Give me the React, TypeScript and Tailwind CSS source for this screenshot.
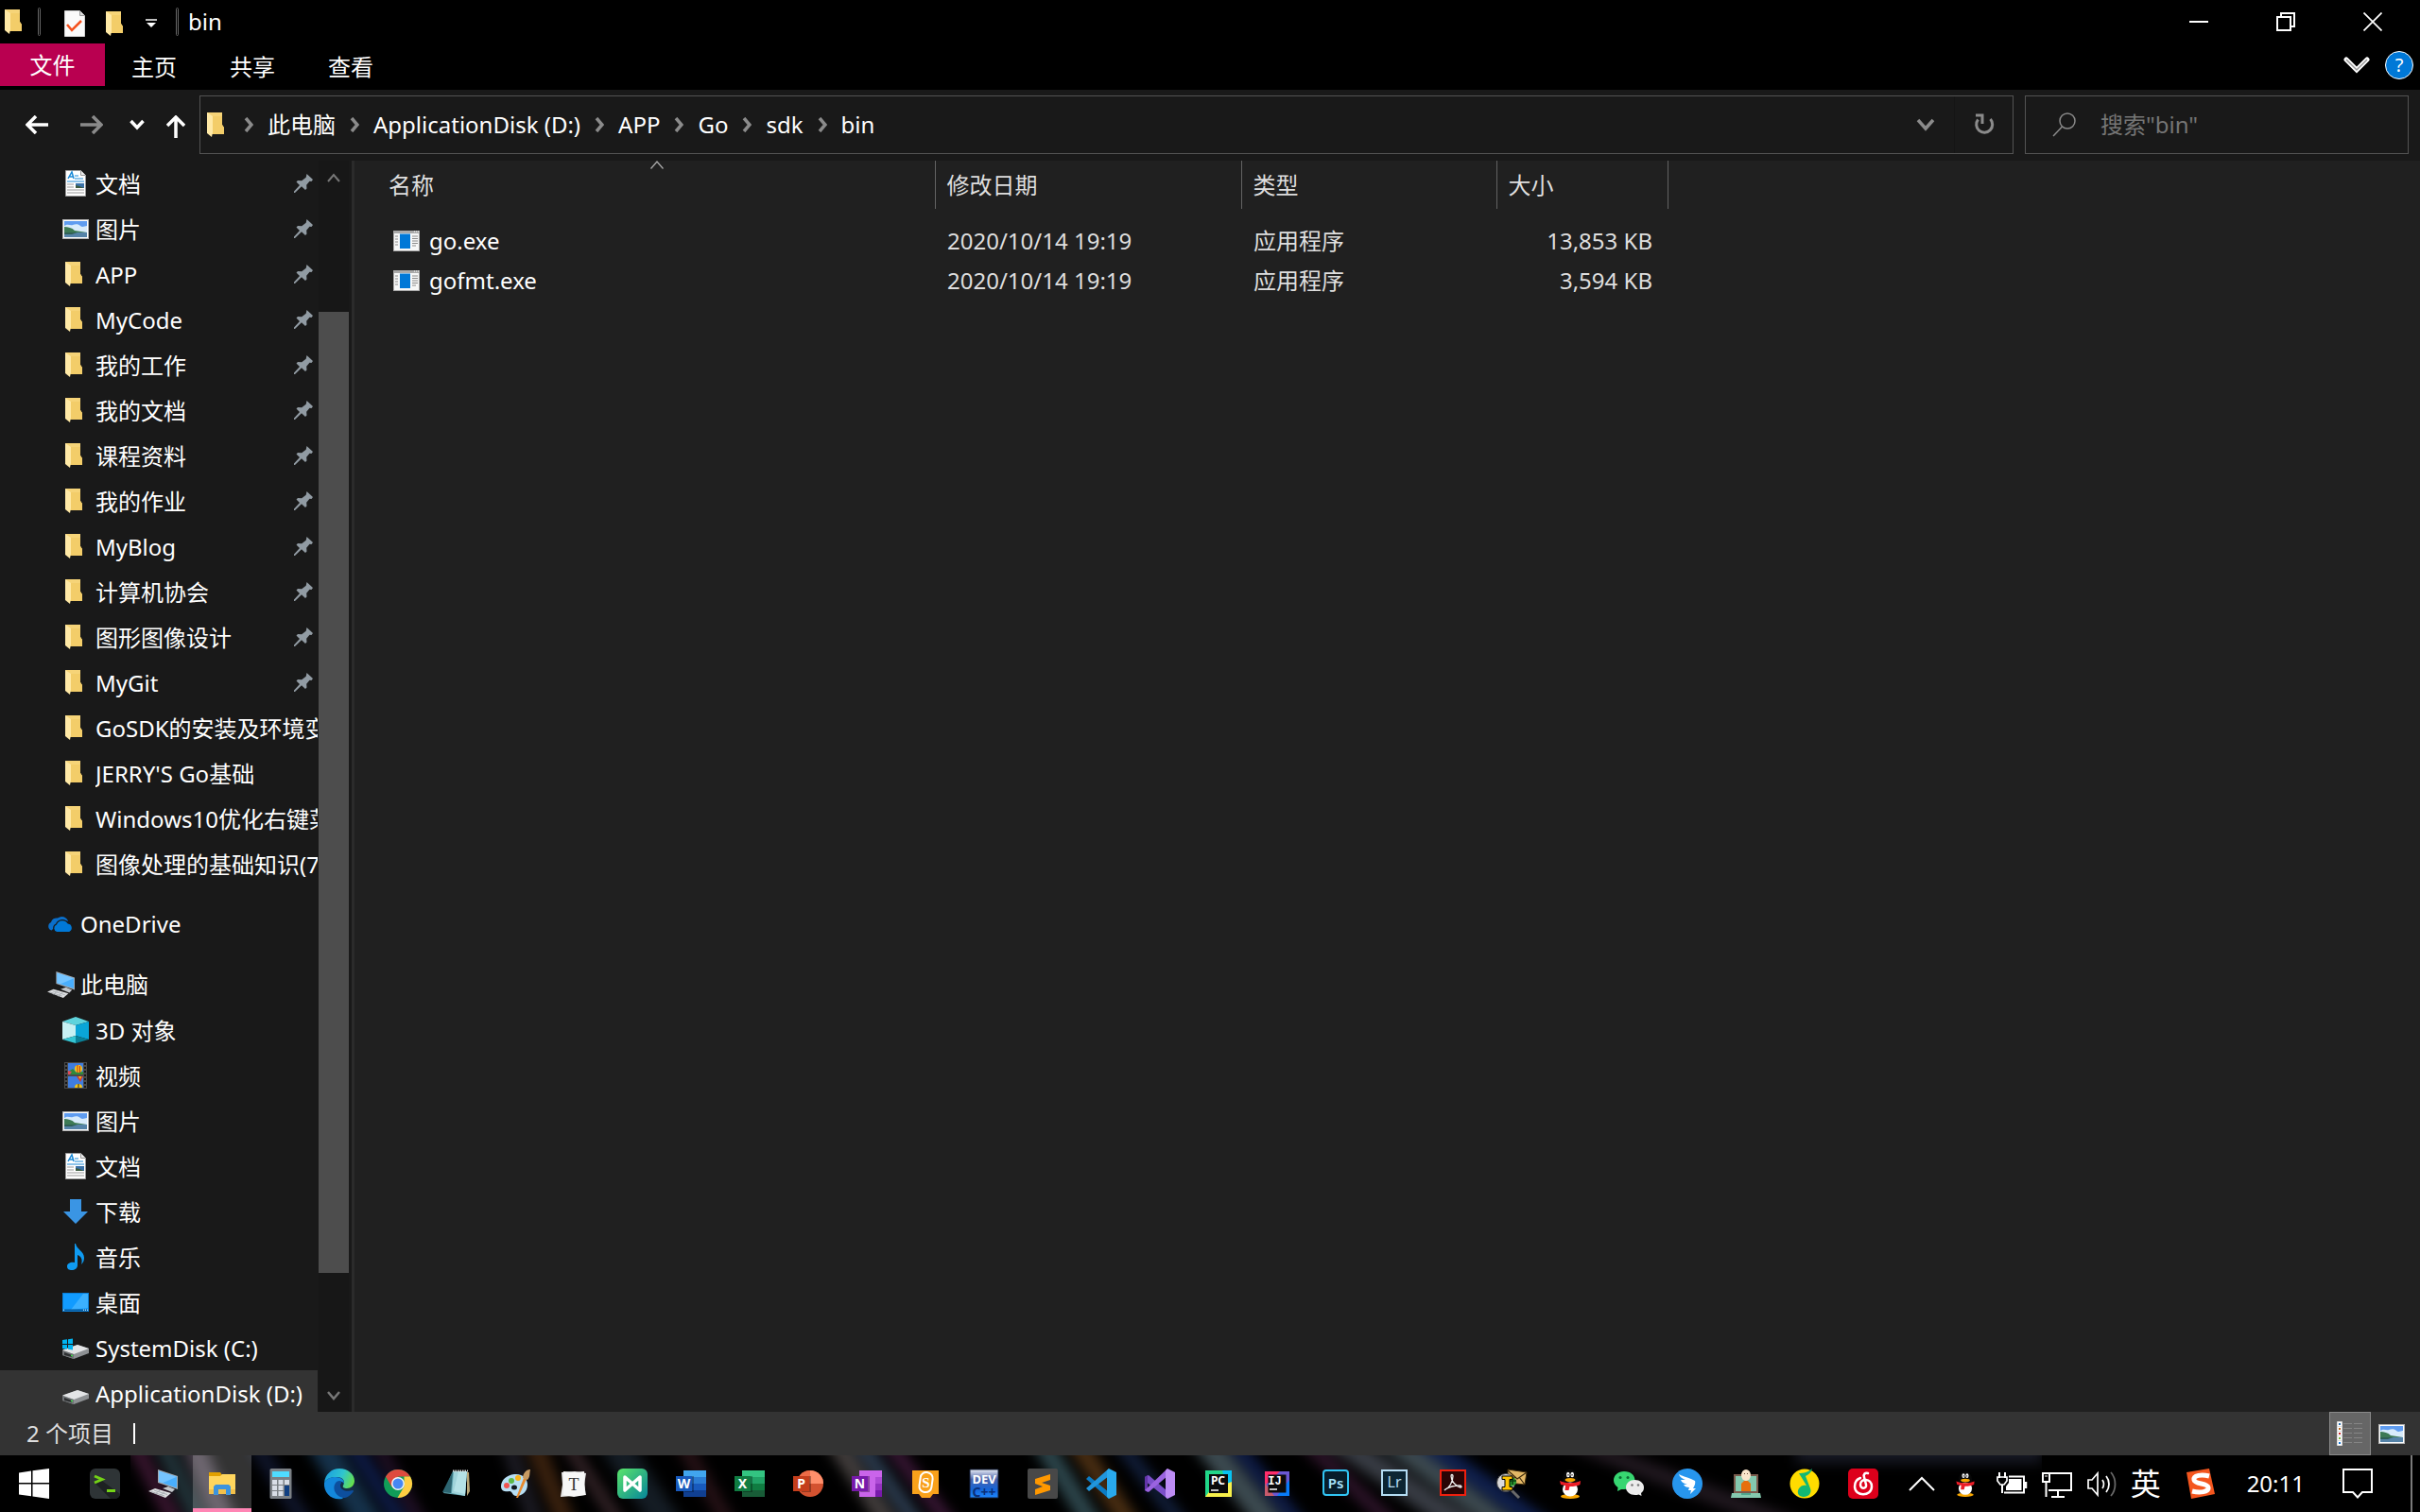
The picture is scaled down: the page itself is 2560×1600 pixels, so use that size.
import type { ReactNode } from "react";

const UI_FONT = "font-['Noto_Sans','Noto_Sans_CJK_SC',sans-serif]";

/* ---------- window icons ---------- */

function FolderIcon({ className = "h-7 w-7" }: { className?: string }) {
  return (
    <svg viewBox="0 0 28 28" className={className} aria-hidden="true">
      <path d="M3 1h16v13l2 3v7H8z" fill="#f6d478" />
      <path d="M8 5h11v9l2 3v7H8z" fill="#f3cd69" />
      <path d="M3 1l6 4v17l-1 5-5-4z" fill="#ffe9a6" />
    </svg>
  );
}

function DocIcon() {
  return (
    <svg viewBox="0 0 28 28" className="h-7 w-7" aria-hidden="true">
      <path d="M3.500 .5h16l5 5v22h-21z" fill="#fff" stroke="#9a9a9a" />
      <path d="M19.500 .5v5h5" fill="#eee" stroke="#9a9a9a" />
      <path d="M6 9l4-7 2 7M7 7h4" stroke="#1c8ad6" strokeWidth="1.500" fill="none" />
      <path d="M13 6h4M13 9h9M5 12h18" stroke="#1c8ad6" />
      <path d="M5 15h7M5 18h7M5 21h18M5 24h18" stroke="#999" />
      <path d="M14 14h9v5h-9z" fill="#3b72a8" />
      <path d="M14 16l4 1 5 2h-9z" fill="#3c5a3e" />
    </svg>
  );
}

function PictureIcon() {
  return (
    <svg viewBox="0 0 28 28" className="h-7 w-7" aria-hidden="true">
      <rect x=".5" y="4.500" width="27" height="20" fill="#fff" stroke="#b0b0b0" />
      <rect x="2" y="6" width="24" height="17" fill="#5f9cf0" />
      <path d="M2 11c4-3 6 0 9-1s6-1 8 1 5 0 7 0v7H2z" fill="#d8ebfb" />
      <path d="M2 12c4 0 8 1 11 4l13 2v1H2z" fill="#3d7a55" />
      <path d="M2 18h24v5H2z" fill="#5583a8" />
      <path d="M2 18h14l-6 2H2z" fill="#2f5f55" />
    </svg>
  );
}

function PinIcon() {
  return (
    <svg viewBox="0 0 20 20" className="mr-[5px] h-5 w-5 shrink-0" aria-hidden="true">
      <path d="M13.500 0L20 6l-1.500 2-2-.2-3.300 4 .3 3.700-1.500 1.500-4-3.800L1 20H0v-1.500l6-6.500-3.500-3.500L4 7l4.200.3 4.500-3.600z" fill="#919ba3" />
    </svg>
  );
}

function CloudIcon() {
  return (
    <svg viewBox="0 0 28 28" className="h-7 w-7" aria-hidden="true">
      <path d="M4.500 20.500A4.500 4.500 0 0 1 4 12a6 6 0 0 1 7-4.500A7 7 0 0 1 22 11l-4-1-5 3-4 3z" fill="#0a6fcb" />
      <path d="M10 22.500a4.500 4.500 0 0 1-.5-8.500 7 7 0 0 1 12.500-1 5 5 0 0 1 1.500 9.500z" fill="#0078d7" stroke="#191919" strokeWidth="1.200" />
    </svg>
  );
}

function PcIcon({ className = "h-7 w-8" }: { className?: string }) {
  return (
    <svg viewBox="0 0 32 30" className={className} aria-hidden="true">
      <path d="M10 0l21 7v14L10 14z" fill="#a5abb0" />
      <path d="M11 1.500l19 6.300v11.600L11 13z" fill="#49aefc" />
      <path d="M11 1.500l19 6.300-15 6.500-4-1.300z" fill="#75c4ff" />
      <path d="M15 20l6-2 7 3-3 3z" fill="#c3c7cb" />
      <path d="M0 23l7-3 17 5-6 5z" fill="#dfe1e3" />
      <path d="M3 23.500l14 4.500M6 22l14 4.500M7 26l5-4M12 28l5-4" stroke="#a8adb2" />
    </svg>
  );
}

function CubeIcon() {
  return (
    <svg viewBox="0 0 28 28" className="h-7 w-7" aria-hidden="true">
      <path d="M14 0l14 5-14 4L0 5z" fill="#5fd3dc" />
      <path d="M0 5l14 4v11L0 24z" fill="#c7f0f3" />
      <path d="M28 5L14 9v11l14 4z" fill="#0aa5d8" />
      <path d="M0 24l14-4v8z" fill="#35c5d3" />
      <path d="M28 24l-14-4v8z" fill="#0a7f96" />
    </svg>
  );
}

function VideoIcon() {
  return (
    <svg viewBox="0 0 28 28" className="h-7 w-7" aria-hidden="true">
      <path d="M2 0h24v28H2z" fill="#4a4a4a" />
      <path d="M3 2h2M3 6h2M3 10h2M3 14h2M3 18h2M3 22h2M3 26h2M23 2h2M23 6h2M23 10h2M23 14h2M23 18h2M23 22h2M23 26h2" stroke="#161616" strokeWidth="2" />
      <path d="M6 1h16v12H6zM6 15h16v12H6z" fill="#3f7de0" />
      <path d="M6 10l5-3 4 4 7-1v3H6z" fill="#2f8a3a" />
      <path d="M6 9l4 1-2 3H6z" fill="#e04a5a" />
      <circle cx="17" cy="7" r="4" fill="#f5c518" />
      <path d="M16 3v8M18.500 4v7" stroke="#c52a1d" />
      <path d="M15 15h7l-3 6z" fill="#d63b25" />
      <path d="M17 15h3l-1 3z" fill="#f5c518" />
      <path d="M13 27a4 4 0 0 1 8 0z" fill="#f5c518" />
      <path d="M17 23v4" stroke="#222" />
    </svg>
  );
}

function DownloadIcon() {
  return (
    <svg viewBox="0 0 28 28" className="h-7 w-7" aria-hidden="true">
      <path d="M8 1h12v13h7L14 27 1 14h7z" fill="#3a95e4" />
    </svg>
  );
}

function MusicIcon() {
  return (
    <svg viewBox="0 0 28 28" className="h-7 w-7" aria-hidden="true">
      <path d="M14 0c1 6 9 8 9 15 0 3-1 5-3 7 2-6-1-9-4-10v11c0 3-3 5-6 5s-5-1-5-4 4-5 8-4V0z" fill="#0f9bf2" />
    </svg>
  );
}

function DesktopIcon() {
  return (
    <svg viewBox="0 0 28 28" className="h-7 w-7" aria-hidden="true">
      <rect x=".5" y="4.500" width="27" height="19" fill="#119bff" stroke="#0a7fd8" />
      <path d="M27 5v15L9 22 22 5z" fill="#3bb0ff" />
      <path d="M1 21.500h26v1.500H1z" fill="#075a9c" />
      <path d="M1 22.200h1M22 22.200h1M24 22.200h1M26 22.200h1" stroke="#fff" />
    </svg>
  );
}

function DriveIcon({ system = false }: { system?: boolean }) {
  return (
    <svg viewBox="0 0 28 28" className="h-7 w-7" aria-hidden="true">
      <path d="M0 17l16-6 12 4v5l-16 6-12-4z" fill="#8d9093" />
      <path d="M0 16.500L16 11l12 4-16 6z" fill="#e3e4e6" />
      <path d="M0 17l12 4v5L0 22z" fill="#6f7275" />
      <path d="M2 19l8 3v2l-8-2z" fill="#2d2f31" />
      <path d="M9 22.500h2" stroke="#3ddc4a" strokeWidth="1.500" />
      {system && <path d="M0 6l5-.7V10H0zM6 5.200L11 4.500V10H6zM0 11h5v4.700L0 15zM6 11h5v5.500l-5-.7z" fill="#00b4f1" />}
    </svg>
  );
}

function ExeIcon() {
  return (
    <svg viewBox="0 0 28 22" className="h-[22px] w-7" aria-hidden="true">
      <path d="M0 0h28v22H0z" fill="#a9a9a9" />
      <path d="M1 3h26v18H1z" fill="#f7f7f7" />
      <path d="M22 1h1M24 1h1M26 1h1" stroke="#fff" />
      <path d="M7 3.500h11V19H7z" fill="#0078d7" />
      <path d="M2 6h3M2 9h3M2 12h3M2 15h3M20 6h6M20 8.500h6M20 11h6M20 13.500h6M20 16h4" stroke="#8b8b8b" />
    </svg>
  );
}

function CrumbChevron() {
  return (
    <svg viewBox="0 0 10 16" className="h-4 w-[10px]" aria-hidden="true">
      <path d="M2 1l6 7-6 7" fill="none" stroke="#8b8b8b" strokeWidth="3.500" />
    </svg>
  );
}

/* ---------- top of the window ---------- */

function TitleBar() {
  return (
    <header className="flex h-[46px] shrink-0 items-center bg-black">
      <div className="flex items-center pl-[2px]">
        <FolderIcon />
        <span className="ml-[10px] h-[30px] w-[3px] rounded-sm border border-[#666]" />
        <button type="button" aria-label="属性" className="ml-[22px] mt-1">
          <svg viewBox="0 0 28 28" className="h-7 w-7" aria-hidden="true">
            <path d="M3.500 .5h16l5 5v22h-21z" fill="#fafafa" stroke="#cfcfcf" />
            <path d="M19.500 .5v5h5" fill="#ddd" stroke="#999" />
            <path d="M6 15l5 6L21 11" fill="none" stroke="#f4511e" strokeWidth="2.500" />
          </svg>
        </button>
        <button type="button" aria-label="新建文件夹" className="ml-4 mt-1">
          <FolderIcon />
        </button>
        <button type="button" aria-label="自定义快速访问工具栏" className="ml-[17px] mt-1">
          <svg viewBox="0 0 12 10" className="h-[10px] w-3" aria-hidden="true">
            <path d="M0 1h12" stroke="#fff" strokeWidth="1.500" />
            <path d="M1 4h10L6 9z" fill="#fff" />
          </svg>
        </button>
        <span className="ml-5 h-[30px] w-[3px] rounded-sm border border-[#666]" />
        <h1 className="ml-[10px] text-2xl leading-[46px]">bin</h1>
      </div>
      <div className="ml-auto flex pr-1">
        <button type="button" aria-label="最小化" className="flex h-[42px] w-[92px] items-center justify-center">
          <svg viewBox="0 0 20 20" className="h-5 w-5"><path d="M0 10h20" stroke="#fff" strokeWidth="2" /></svg>
        </button>
        <button type="button" aria-label="向下还原" className="flex h-[42px] w-[92px] items-center justify-center">
          <svg viewBox="0 0 20 20" className="h-5 w-5"><path d="M1 5h14v14H1zM5 5V1h14v14h-4" fill="none" stroke="#fff" strokeWidth="2" /></svg>
        </button>
        <button type="button" aria-label="关闭" className="flex h-[42px] w-[92px] items-center justify-center">
          <svg viewBox="0 0 20 20" className="h-5 w-5"><path d="M.5 .5l19 19M19.500 .5l-19 19" stroke="#fff" strokeWidth="1.700" /></svg>
        </button>
      </div>
    </header>
  );
}

function RibbonTabs() {
  return (
    <div className="flex h-[49px] shrink-0 items-start bg-black text-2xl">
      <button type="button" className="h-[45px] w-[111px] bg-[#b90050] leading-[44px]">文件</button>
      {["主页", "共享", "查看"].map((tab) => (
        <button key={tab} type="button" className="h-[49px] w-[104px] leading-[48px]">{tab}</button>
      ))}
      <div className="ml-auto flex h-[46px] items-center gap-4 pr-[7px]">
        <button type="button" aria-label="展开功能区">
          <svg viewBox="0 0 28 18" className="h-[18px] w-7" aria-hidden="true">
            <path d="M3 3l11 11L25 3" fill="none" stroke="#fff" strokeWidth="5" strokeLinecap="round" />
            <path d="M3 3l11 11L25 3" fill="none" stroke="#9a9a9a" strokeWidth="1.500" />
          </svg>
        </button>
        <button type="button" aria-label="帮助" className="h-[30px] w-[30px] rounded-full border border-white bg-[#0078d7] text-xl leading-7">?</button>
      </div>
    </div>
  );
}

const crumbs = ["此电脑", "ApplicationDisk (D:)", "APP", "Go", "sdk", "bin"];

function AddressRow() {
  return (
    <div className="flex h-[75px] shrink-0 items-start bg-[#191919] pt-[6px] pr-3">
      <div className="flex h-[62px] w-[211px] items-center pl-[27px]">
        <button type="button" aria-label="后退">
          <svg viewBox="0 0 24 20" className="h-5 w-6"><path d="M11 1l-9 9 9 9M2 10h22" fill="none" stroke="#fff" strokeWidth="3.500" /></svg>
        </button>
        <button type="button" aria-label="前进" className="ml-[34px]">
          <svg viewBox="0 0 24 20" className="h-5 w-6"><path d="M13 1l9 9-9 9M22 10H0" fill="none" stroke="#8a8a8a" strokeWidth="3.500" /></svg>
        </button>
        <button type="button" aria-label="最近浏览的位置" className="ml-7">
          <svg viewBox="0 0 16 12" className="h-3 w-4"><path d="M1.500 2L8 9l6.500-7" fill="none" stroke="#fff" strokeWidth="3.500" /></svg>
        </button>
        <button type="button" aria-label="上移" className="ml-[23px]">
          <svg viewBox="0 0 20 24" className="mt-1 h-6 w-5"><path d="M1 11l9-9 9 9M10 2v22" fill="none" stroke="#fff" strokeWidth="3.500" /></svg>
        </button>
      </div>
      <nav aria-label="地址" className="flex h-[62px] grow items-center border border-[#535353] pl-1 text-2xl">
        <FolderIcon />
        <ol className="ml-[14px] flex items-center">
          {crumbs.map((crumb) => (
            <li key={crumb} className="flex items-center">
              <CrumbChevron />
              <a href="#" className="mx-[15px]">{crumb}</a>
            </li>
          ))}
        </ol>
        <button type="button" aria-label="以前的位置" className="mr-5 ml-auto">
          <svg viewBox="0 0 20 14" className="h-[14px] w-5"><path d="M2 2l8 9 8-9" fill="none" stroke="#8b8b8b" strokeWidth="3.500" /></svg>
        </button>
        <button type="button" aria-label="刷新" className="flex h-full w-[62px] items-center justify-center border-l border-[#151515]">
          <svg viewBox="0 0 22 26" className="h-[26px] w-[22px]">
            <path d="M4.500 7.500A8.500 8.500 0 1 0 17.500 7" fill="none" stroke="#8b8b8b" strokeWidth="3" />
            <path d="M2 1.500h8.500V12h-3V4.500H2z" fill="#8b8b8b" />
          </svg>
        </button>
      </nav>
      <label className="ml-3 flex h-[62px] w-[406px] items-center border border-[#535353] pl-7">
        <svg viewBox="0 0 26 26" className="h-[26px] w-[26px] shrink-0" aria-hidden="true">
          <circle cx="16" cy="9" r="8" fill="none" stroke="#8a8a8a" strokeWidth="1.500" />
          <path d="M10.500 15L1 25" stroke="#8a8a8a" strokeWidth="1.500" />
        </svg>
        <input type="search" aria-label="搜索" placeholder={'搜索"bin"'} className="ml-[25px] w-full min-w-0 bg-transparent text-2xl outline-none placeholder:text-[#757575]" />
      </label>
    </div>
  );
}

/* ---------- navigation tree ---------- */

type Item = { label: string; icon: ReactNode; pinned?: boolean; selected?: boolean };

const folder = (label: string, pinned = true): Item => ({ label, icon: <FolderIcon />, pinned });

const quickAccess: Item[] = [
  { label: "文档", icon: <DocIcon />, pinned: true },
  { label: "图片", icon: <PictureIcon />, pinned: true },
  folder("APP"),
  folder("MyCode"),
  folder("我的工作"),
  folder("我的文档"),
  folder("课程资料"),
  folder("我的作业"),
  folder("MyBlog"),
  folder("计算机协会"),
  folder("图形图像设计"),
  folder("MyGit"),
  folder("GoSDK的安装及环境变", false),
  folder("JERRY'S Go基础", false),
  folder("Windows10优化右键菜", false),
  folder("图像处理的基础知识(7", false),
];

const thisPc: Item[] = [
  { label: "3D 对象", icon: <CubeIcon /> },
  { label: "视频", icon: <VideoIcon /> },
  { label: "图片", icon: <PictureIcon /> },
  { label: "文档", icon: <DocIcon /> },
  { label: "下载", icon: <DownloadIcon /> },
  { label: "音乐", icon: <MusicIcon /> },
  { label: "桌面", icon: <DesktopIcon /> },
  { label: "SystemDisk (C:)", icon: <DriveIcon system /> },
  { label: "ApplicationDisk (D:)", icon: <DriveIcon />, selected: true },
];

function TreeItems({ items }: { items: Item[] }) {
  return (
    <ul>
      {items.map((item) => (
        <li key={item.label} className={item.selected ? "bg-[#333]" : ""}>
          <a href="#" className="flex h-12 items-center pl-[66px]">
            <span className="w-7 shrink-0">{item.icon}</span>
            <span className="ml-[7px] min-w-0 grow overflow-hidden leading-[47px] whitespace-nowrap">{item.label}</span>
            {item.pinned && <PinIcon />}
          </a>
        </li>
      ))}
    </ul>
  );
}

function Sidebar() {
  return (
    <aside className="flex w-[375px] shrink-0 overflow-hidden border-r-[3px] border-[#2b2b2b] bg-[#191919] text-2xl">
      <nav aria-label="导航窗格" className="w-[336px] overflow-hidden">
        <TreeItems items={quickAccess} />
        <a href="#" className="mt-4 flex h-12 items-center gap-[7px] pl-[50px] leading-[46px]"><CloudIcon />OneDrive</a>
        <a href="#" className="mt-4 flex h-12 items-center gap-1 pl-[49px] leading-[46px]"><PcIcon />此电脑</a>
        <TreeItems items={thisPc} />
      </nav>
      <div className="ml-px flex w-8 flex-col items-center bg-[#171717]">
        <button type="button" aria-label="向上滚动" className="flex h-9 w-full items-center justify-center">
          <svg viewBox="0 0 14 10" className="h-[10px] w-[14px]"><path d="M1 9l6-7 6 7" fill="none" stroke="#777" strokeWidth="2" /></svg>
        </button>
        <div className="mt-[124px] w-full grow bg-[#4d4d4d]" />
        <button type="button" aria-label="向下滚动" className="mt-[113px] flex h-[34px] w-full items-center justify-center">
          <svg viewBox="0 0 14 10" className="h-[10px] w-[14px]"><path d="M1 1l6 7 6-7" fill="none" stroke="#777" strokeWidth="2.500" /></svg>
        </button>
      </div>
    </aside>
  );
}

/* ---------- file list ---------- */

const files = [
  { name: "go.exe", date: "2020/10/14 19:19", kind: "应用程序", size: "13,853 KB" },
  { name: "gofmt.exe", date: "2020/10/14 19:19", kind: "应用程序", size: "3,594 KB" },
];

function FileList() {
  return (
    <main className="grow bg-[#202020] text-2xl text-[#dedede]">
      <table className="table-fixed border-collapse text-left">
        <colgroup>
          <col className="w-[614px]" />
          <col className="w-[324px]" />
          <col className="w-[270px]" />
          <col className="w-[181px]" />
        </colgroup>
        <thead>
          <tr className="h-[51px]">
            <th aria-sort="ascending" className="relative border-r border-[#636363] p-0 pl-9 font-normal">
              <button type="button">名称</button>
              <svg viewBox="0 0 14 9" className="absolute top-0 left-[313px] h-[9px] w-[14px]" aria-hidden="true">
                <path d="M.5 8.500L7 1l6.500 7.500" fill="none" stroke="#aaa" strokeWidth="1.300" />
              </svg>
            </th>
            {["修改日期", "类型", "大小"].map((head) => (
              <th key={head} className="border-r border-[#636363] p-0 pl-3 font-normal">
                <button type="button">{head}</button>
              </th>
            ))}
          </tr>
        </thead>
        <tbody>
          <tr className="h-[13px]" aria-hidden="true"><td colSpan={4} className="p-0" /></tr>
          {files.map((file) => (
            <tr key={file.name} className="h-[42px] leading-10">
              <td className="p-0 pl-[41px]">
                <a href="#" className="flex items-center gap-[10px] text-white">
                  <ExeIcon />
                  {file.name}
                </a>
              </td>
              <td className="p-0 pl-[13px]">{file.date}</td>
              <td className="p-0 pl-[13px]">{file.kind}</td>
              <td className="p-0 pr-4 text-right">{file.size}</td>
            </tr>
          ))}
        </tbody>
      </table>
    </main>
  );
}

function StatusBar() {
  return (
    <footer className="flex h-[46px] shrink-0 items-center bg-[#333] text-2xl">
      <p className="pl-7 text-[#dedede]">2 个项目</p>
      <span className="ml-[21px] h-[22px] w-[2px] bg-white" />
      <button type="button" aria-label="详细信息" className="ml-auto flex h-[46px] w-11 items-center justify-center border border-[#8a8a8a] bg-[#666]">
        <svg viewBox="0 0 28 26" className="h-[26px] w-7" aria-hidden="true">
          {[0, 1, 2, 3, 4].map((row) => (
            <g key={row} transform={`translate(0 ${row * 5})`}>
              <path d="M.5 .5h5v5h-5z" fill="#fff" stroke="#ddd" />
              <path d="M2 2h2v2H2z" fill={["#2a6fb0", "#b5651d", "#c62828", "#7cb342", "#1976d2"][row]} />
              <path d="M7 2.500h9M18 2.500h9" stroke="#858585" />
            </g>
          ))}
        </svg>
      </button>
      <button type="button" aria-label="大缩略图" className="mr-2 flex h-[46px] w-11 items-center justify-center">
        <PictureIcon />
      </button>
    </footer>
  );
}

/* ---------- taskbar ---------- */

function Icon({ children, className = "h-8 w-8" }: { children: ReactNode; className?: string }) {
  return <svg viewBox="0 0 32 32" className={`overflow-visible ${className}`} aria-hidden="true">{children}</svg>;
}

function OfficeIcon({ letter, dark, tones }: { letter: string; dark: string; tones: string[] }) {
  return (
    <Icon>
      <path d="M8 2h24v8H8z" fill={tones[0]} />
      <path d="M8 9h24v7H8z" fill={tones[1]} />
      <path d="M8 16h24v7H8z" fill={tones[2]} />
      <path d="M8 23h24v7H8z" fill={tones[3]} />
      <path d="M9 8h10v17H9z" fill="#000" opacity=".3" />
      <path d="M0 8h17v16H0z" fill={dark} />
      <text x="8.500" y="21" textAnchor="middle" fontSize="14" fontWeight="700" fill="#fff">{letter}</text>
    </Icon>
  );
}

function QqIcon({ className }: { className?: string }) {
  return (
    <Icon className={className}>
      <ellipse cx="16" cy="29.500" rx="10" ry="2.500" fill="#f7a600" />
      <path d="M8 12c0-15 16-15 16 0l1 9c1 10-19 10-18 0z" fill="#080808" />
      <ellipse cx="16" cy="22" rx="8" ry="7.500" fill="#fff" />
      <ellipse cx="13.800" cy="6.500" rx="1.800" ry="2.700" fill="#fff" />
      <ellipse cx="18.200" cy="6.500" rx="1.800" ry="2.700" fill="#fff" />
      <path d="M14 6v1.500M18 6v1.500" stroke="#000" />
      <ellipse cx="16" cy="12" rx="5.500" ry="2" fill="#f7a600" />
      <path d="M5 13c7 3 15 3 22 0l-.5 4c-3 1.500-6 2-11 2l-1 4h-4l.5-5-5-1z" fill="#eb1c26" />
    </Icon>
  );
}

const apps: { name: string; icon: ReactNode; active?: boolean }[] = [
  {
    name: "终端",
    icon: (
      <Icon>
        <rect width="32" height="32" rx="6" fill="#2e3436" />
        <path d="M6 16l7-3 19 14c0 3-3 5-6 5h-4z" fill="#1d2122" />
        <path d="M5 8l8 3.500L5 15" fill="none" stroke="#73d216" strokeWidth="3" />
        <path d="M18 23.500h9" stroke="#73d216" strokeWidth="3" />
      </Icon>
    ),
  },
  { name: "此电脑", icon: <PcIcon className="h-[30px] w-8" /> },
  {
    name: "文件资源管理器",
    active: true,
    icon: (
      <Icon>
        <path d="M2 4h12l2 3v4H2z" fill="#e2a100" />
        <path d="M2 8h12l2-2h14v21H2z" fill="#ffd65e" />
        <path d="M2 22h28v5H2z" fill="#f3c04a" />
        <path d="M7 28V19l2-2h14l2 2v9h-5v-6h-8v6z" fill="#3c93dd" />
      </Icon>
    ),
  },
  {
    name: "计算器",
    icon: (
      <Icon>
        <rect x="4.500" width="23" height="32" rx="1.500" fill="#7b8085" />
        <path d="M7 3h18v6H7z" fill="#4fdcff" />
        <path d="M7 12h5v5H7zM13.500 12h5v5h-5zM20 12h5v5h-5zM7 18h5v5H7zM13.500 18h5v5h-5zM7 24h5v5H7zM13.500 24h5v5h-5z" fill="#d8dde6" />
        <path d="M20 18h5v11h-5z" fill="#103f82" />
      </Icon>
    ),
  },
  {
    name: "Edge",
    icon: (
      <Icon>
        <defs>
          <linearGradient id="edgeTop" x1="0" x2="1" y1=".3" y2=".6">
            <stop offset="0" stopColor="#1a9fe0" />
            <stop offset=".55" stopColor="#2fc4cf" />
            <stop offset="1" stopColor="#66e04a" />
          </linearGradient>
        </defs>
        <path d="M16 0c9 0 16 6 16 13 0 5-4 8-8 8-3 0-5-1-4-3 3-5-1-9-6-9C7 9 2 11 0 15 1 6 8 0 16 0z" fill="url(#edgeTop)" />
        <path d="M0 15c2-4 7-6 12-6 6 0 9 3 9 7-1-2-4-3-6-2-4 3-3 12 6 16l-2 2C8 34-1 26 0 15z" fill="#1388dc" />
        <path d="M13 14c-6 6-1 17 9 17 4-1 7-4 9-7 0-1-1-1-1-1-6 2-13 0-13-5 0-2 2-3 1-4-1-1-4-1-5 0z" fill="#0d4f9e" />
      </Icon>
    ),
  },
  {
    name: "Chrome",
    icon: (
      <Icon>
        <circle cx="16" cy="16" r="15" fill="#109d58" />
        <path d="M3 8.500A15 15 0 0 1 29 8.500H16l-6.500 11z" fill="#de4b3e" />
        <path d="M29 8.500A15 15 0 0 1 15.500 31l7-12V8.500z" fill="#ffcd42" />
        <circle cx="16" cy="16" r="7" fill="#f4f4f4" />
        <circle cx="16" cy="16" r="5.500" fill="#4687f4" />
      </Icon>
    ),
  },
  {
    name: "记事本",
    icon: (
      <Icon>
        <path d="M27 4h2l1 20-3 5z" fill="#bba879" />
        <path d="M12 3h15l-2 26-23-3z" fill="#5fa3ae" />
        <path d="M13 3h14l-2 26-14-3z" fill="#9fd3da" />
        <path d="M18 3h9l-2 24-12-3z" fill="#c5ecf0" opacity=".6" />
        <path d="M12 3L1 25l9 1z" fill="#2d6571" />
        <path d="M12 2.500h16" stroke="#dadada" strokeWidth="2" strokeDasharray="1.500 1" />
      </Icon>
    ),
  },
  {
    name: "画图",
    icon: (
      <Icon>
        <path d="M15 6c9-1 14 5 14 11 0 8-6 12-12 12-4 0-4-5-7-5-4 1-9 0-9-5C1 12 7 7 15 6z" fill="#b7dff5" />
        <ellipse cx="15" cy="20" rx="3" ry="2.500" fill="#121820" />
        <circle cx="7" cy="18" r="3" fill="#ef5350" />
        <circle cx="12" cy="13" r="3" fill="#5cb948" />
        <circle cx="19" cy="10" r="3" fill="#f9b41c" />
        <path d="M25 10l3 1-9 20h-2z" fill="#e78a2e" />
        <path d="M24 10c0-4 3-9 8-9-1 4 0 8-3 11z" fill="#c79a62" />
      </Icon>
    ),
  },
  {
    name: "Typora",
    icon: (
      <Icon>
        <path d="M3 4l14-1 12 2-2 12 2 11-14 1-13 1 2-13z" fill="#e9e9e9" />
        <path d="M5 3l11 1 11-1 1 25-12 2-11-2z" fill="#f7f7f7" />
        <text x="16" y="23" textAnchor="middle" fontSize="18" fill="#333" className="font-['Liberation_Serif',serif]">T</text>
      </Icon>
    ),
  },
  {
    name: "思维导图",
    icon: (
      <Icon>
        <defs>
          <linearGradient id="mind" x1="0" x2="1" y1="0" y2="1">
            <stop offset="0" stopColor="#5be56a" />
            <stop offset="1" stopColor="#06869a" />
          </linearGradient>
        </defs>
        <rect width="32" height="32" rx="6" fill="url(#mind)" />
        <path d="M8 23V9l16 14V9L8 23z" fill="none" stroke="#fff" strokeWidth="3.500" strokeLinejoin="round" />
      </Icon>
    ),
  },
  { name: "Word", icon: <OfficeIcon letter="W" dark="#185abd" tones={["#41a5ee", "#2b7cd3", "#185abd", "#103f91"]} /> },
  { name: "Excel", icon: <OfficeIcon letter="X" dark="#107c41" tones={["#33c481", "#21a366", "#107c41", "#185c37"]} /> },
  {
    name: "PowerPoint",
    icon: (
      <Icon>
        <circle cx="18" cy="16" r="14" fill="#d35230" />
        <path d="M18 2a14 14 0 0 1 14 14H18z" fill="#ff8f6b" />
        <path d="M18 2A14 14 0 0 0 4 16h14z" fill="#ed6c47" />
        <path d="M9 8h10v17H9z" fill="#000" opacity=".3" />
        <path d="M0 8h17v16H0z" fill="#c43e1c" />
        <text x="8.500" y="21" textAnchor="middle" fontSize="14" fontWeight="700" fill="#fff">P</text>
      </Icon>
    ),
  },
  {
    name: "OneNote",
    icon: (
      <Icon>
        <path d="M8 2h24v28H8z" fill="#ca64ea" />
        <path d="M25 9h7v7h-7z" fill="#ae4bd5" />
        <path d="M25 16h7v7h-7z" fill="#9332bf" />
        <path d="M25 23h7v7h-7z" fill="#7719aa" />
        <path d="M9 8h10v17H9z" fill="#000" opacity=".3" />
        <path d="M0 8h17v16H0z" fill="#7719aa" />
        <text x="8.500" y="21" textAnchor="middle" fontSize="14" fontWeight="700" fill="#fff">N</text>
      </Icon>
    ),
  },
  {
    name: "Scratch",
    icon: (
      <Icon>
        <path d="M2 2h28v25h-6l-3 4h-9l-3-4H2z" fill="#f9a11b" />
        <rect x="10" y="4" width="13" height="21" rx="6" transform="rotate(8 16 15)" fill="none" stroke="#fff" strokeWidth="2" />
        <text x="16.500" y="20" textAnchor="middle" fontSize="15" fontWeight="700" fill="#fff" className="font-['Liberation_Serif',serif]">S</text>
      </Icon>
    ),
  },
  {
    name: "Dev-C++",
    icon: (
      <Icon>
        <defs>
          <linearGradient id="dev" x1="0" x2="0" y1="0" y2="1">
            <stop offset="0" stopColor="#e8ecf5" />
            <stop offset=".35" stopColor="#4a62a8" />
            <stop offset=".7" stopColor="#1565d8" />
            <stop offset="1" stopColor="#1e88ff" />
          </linearGradient>
        </defs>
        <path d="M1 1h30v30H1z" fill="url(#dev)" stroke="#15203c" />
        <text x="16" y="15.500" textAnchor="middle" fontSize="13" fontWeight="700" fill="#fff">DEV</text>
        <text x="16" y="29.500" textAnchor="middle" fontSize="14" fontWeight="700" fill="#0b2f78">C++</text>
      </Icon>
    ),
  },
  {
    name: "Sublime Text",
    icon: (
      <Icon>
        <rect width="32" height="32" rx="2" fill="#484848" />
        <path d="M24 6v6l-9 3 9 3v5L8 28v-6l8-3-8-3v-5z" fill="#ff9800" />
      </Icon>
    ),
  },
  {
    name: "Visual Studio Code",
    icon: (
      <Icon>
        <path d="M0 11l3-3 21 17v7z" fill="#0b7bc4" />
        <path d="M0 21l3 3L24 8V0z" fill="#2196dc" />
        <path d="M24 0l8 4v24l-8 4-2-2V2z" fill="#29a9ec" />
      </Icon>
    ),
  },
  {
    name: "Visual Studio",
    icon: (
      <Icon>
        <path d="M0 9l4-2 20 17v8L0 13z" fill="#7b4fc9" />
        <path d="M0 9v14l3 2V7z" fill="#6234a8" />
        <path d="M0 23l4 2L24 8V0z" fill="#9a63e0" />
        <path d="M24 0l8 4v24l-8 4-2-2V2z" fill="#bd8cf5" />
      </Icon>
    ),
  },
  {
    name: "PyCharm",
    icon: (
      <Icon>
        <path d="M2 2h28v28H2z" fill="#21d789" />
        <path d="M20 2h10v14l-6 2z" fill="#07c3f2" />
        <path d="M30 14v16H2l6-8z" fill="#f7f04a" />
        <path d="M6 6h20v20H6z" fill="#0b0b0b" />
        <text x="15.500" y="17" textAnchor="middle" fontSize="12" fontWeight="700" fill="#fff">PC</text>
        <path d="M8 23h8" stroke="#fff" strokeWidth="1.500" />
      </Icon>
    ),
  },
  {
    name: "IntelliJ IDEA",
    icon: (
      <Icon>
        <path d="M3 3h26v26H3z" fill="#6b57d2" />
        <path d="M3 3h16L3 18z" fill="#fe2d6b" />
        <path d="M3 15l10 14H3z" fill="#c75a6b" />
        <path d="M29 12v17H16z" fill="#087cfa" />
        <path d="M6.500 6.500h19v19h-19z" fill="#0b0b0b" />
        <text x="13.500" y="17" textAnchor="middle" fontSize="12" fontWeight="700" fill="#fff" className="font-['Liberation_Mono',monospace]">IJ</text>
        <path d="M8 22h8" stroke="#fff" strokeWidth="1.500" />
      </Icon>
    ),
  },
  {
    name: "Photoshop",
    icon: (
      <Icon>
        <rect x="3" y="2" width="26" height="26" rx="3" fill="#071d2b" stroke="#31c5f4" strokeWidth="2" />
        <text x="16" y="21" textAnchor="middle" fontSize="15" fontWeight="600" fill="#a8e2fb">Ps</text>
      </Icon>
    ),
  },
  {
    name: "Lightroom",
    icon: (
      <Icon>
        <path d="M3 2h26v26H3z" fill="#0c2533" stroke="#b4dcf3" strokeWidth="2" />
        <text x="16" y="20" textAnchor="middle" fontSize="16" fill="#b4dcf3">Lr</text>
      </Icon>
    ),
  },
  {
    name: "Acrobat",
    icon: (
      <Icon>
        <path d="M3 2h26v26H3z" fill="#2a0506" stroke="#ef1f0e" strokeWidth="2" />
        <path d="M7 23c5-2 9-9 9-15 0-2-2-2-2 0 0 5 5 11 10 12 2 0 1-2-1-2-6 0-12 2-15 4z" fill="none" stroke="#eee" strokeWidth="1.300" />
      </Icon>
    ),
  },
  {
    name: "邮件搜索",
    icon: (
      <Icon>
        <path d="M12 1l20 3-2 13-18-2z" fill="#e3b866" stroke="#3c2a0c" />
        <path d="M12 2l10 9 10-7M13 15l7-6M30 17l-6-8" fill="none" stroke="#3c2a0c" strokeWidth="1.200" />
        <circle cx="10" cy="15" r="9.500" fill="#dadada" stroke="#444" />
        <path d="M14 9c6 0 9 4 6 8l-6 3z" fill="#2c9c30" />
        <path d="M14 13h7M17 9v8" stroke="#0d3d10" strokeWidth="1.500" />
        <path d="M16 23l8 8" stroke="#6a6a6a" strokeWidth="3" />
        <path d="M6 8h11v3.500h-3v8h3V23H6v-3.500h3v-8H6z" fill="#ffc400" stroke="#000" />
      </Icon>
    ),
  },
  { name: "QQ", icon: <QqIcon /> },
  {
    name: "微信",
    icon: (
      <Icon>
        <path d="M11 3c7 0 11.500 4 11.500 9.500S18 22 11 22H8l-4 2 .5-4C2 18 0 16 0 12.500 0 7 5 3 11 3z" fill="#37d671" />
        <path d="M22.500 12c5 0 9.500 3.500 9.500 8 0 3-1 4-3 6l.5 3-3-1.500c-7 2-13.500-2-13.500-7.500 0-4.500 4-8 9.500-8z" fill="#ececec" />
        <circle cx="7" cy="9.500" r="1.500" fill="#0c6b34" />
        <circle cx="15" cy="9.500" r="1.500" fill="#0c6b34" />
        <circle cx="19.500" cy="17.500" r="1.300" fill="#777" />
        <circle cx="26" cy="17.500" r="1.300" fill="#777" />
      </Icon>
    ),
  },
  {
    name: "钉钉",
    icon: (
      <Icon>
        <circle cx="16" cy="16" r="16" fill="#2796ee" />
        <path d="M7 6c5 3 12 4 17 7 1 3-1 6-2 8h3l-6 6 1-4h-3l1-3c-3 0-5-1-6-3h4c-3-1-6-2-7-5h5C11 11 8 9 7 6z" fill="#fff" />
      </Icon>
    ),
  },
  {
    name: "在线课堂",
    icon: (
      <Icon>
        <path d="M3 6h26v20H3z" fill="#7a5a4c" />
        <path d="M5 8h22v16H5z" fill="#84c8ae" />
        <path d="M11 24v-8l3-3h4l3 3v8z" fill="#e66f0c" />
        <ellipse cx="16" cy="7" rx="5" ry="6" fill="#fbe6cc" />
        <path d="M14 5.500h1M17 5.500h1" stroke="#6b4a35" />
        <path d="M1 26h30l1 5H0z" fill="#84c8ae" />
        <path d="M11 26h10v2H11z" fill="#4ea68c" />
      </Icon>
    ),
  },
  {
    name: "QQ音乐",
    icon: (
      <Icon>
        <circle cx="16" cy="16" r="15.500" fill="#ffdc00" />
        <path d="M10 5c5 0 10-1 14-5-1 4-3 6-7 8l5 13c2 5-2 9-7 9s-8-4-5-9c2-3 5-4 8-3L10 5z" fill="#12b874" />
      </Icon>
    ),
  },
  {
    name: "网易云音乐",
    icon: (
      <Icon>
        <rect width="32" height="32" rx="5" fill="#dd001b" />
        <path d="M21 5c-3-1-5 1-4 4l2 8c1 5-6 5-6 0 0-7 12-7 12 2 0 11-18 11-18 0 0-5 3-8 6-9" fill="none" stroke="#fff" strokeWidth="2.500" strokeLinecap="round" />
      </Icon>
    ),
  },
];

/* Light streaks of the desktop showing through: top x, bottom x, width, colour. */
const streaks: [number, number, number, string][] = [
  [148, 180, 16, "#3a1630"],
  [178, 206, 18, "#22343a"],
  [210, 232, 24, "#4b424e"],
  [275, 318, 16, "#10162c"],
  [345, 385, 28, "#15314a"],
  [378, 420, 16, "#0e1c48"],
  [405, 440, 10, "#2a1430"],
  [545, 560, 16, "#1d1c24"],
  [572, 592, 20, "#3a210e"],
  [605, 650, 12, "#38262a"],
  [655, 700, 30, "#141c24"],
  [728, 765, 14, "#2a1318"],
  [890, 935, 20, "#423d3c"],
  [915, 965, 16, "#2c3c50"],
  [945, 1000, 14, "#3c1838"],
  [1108, 1150, 20, "#2d464c"],
  [1145, 1190, 20, "#4a2e12"],
  [1190, 1245, 14, "#12203e"],
  [1280, 1340, 26, "#3c4a50"],
  [1310, 1370, 14, "#0f1e4e"],
  [1385, 1470, 14, "#30152c"],
  [1420, 1545, 24, "#383c44"],
  [1475, 1590, 22, "#3d4a50"],
  [1510, 1630, 18, "#0f2050"],
  [1660, 1900, 16, "#231a22"],
];

function TaskbarBackdrop() {
  return (
    <svg viewBox="0 0 2560 60" preserveAspectRatio="none" className="absolute inset-0 h-full w-full" aria-hidden="true">
      <defs>
        <filter id="soft" x="0" y="-.5" width="1" height="2" colorInterpolationFilters="sRGB"><feGaussianBlur stdDeviation="7" /></filter>
      </defs>
      <g filter="url(#soft)">
        {streaks.map(([top, bottom, width, color]) => (
          <path key={top} d={`M${top - 10} -20L${bottom + 10} 80`} stroke={color} strokeWidth={width} />
        ))}
        <path d="M1900 -4h260" stroke="#181a26" strokeWidth="24" />
      </g>
    </svg>
  );
}

function Taskbar() {
  return (
    <footer className="relative flex h-[60px] shrink-0 bg-black">
      <TaskbarBackdrop />
      <div className="relative flex">
        <button type="button" aria-label="开始" className="mr-2 flex w-[72px] items-center justify-center">
          <Icon><path d="M0 4.500L13 2.500V15H0zM14.500 2.300L32 0v15H14.500zM0 16.500h13v12.800L0 27.500zM14.500 16.500H32V32l-17.500-2.500z" fill="#fff" /></Icon>
        </button>
        {apps.map((app) => (
          <button
            key={app.name}
            type="button"
            aria-label={app.name}
            className={
              app.active
                ? "flex w-[62px] items-center justify-center border-b-4 border-[#ff85b4] bg-white/20 pt-1"
                : "flex w-[62px] items-center justify-center"
            }
          >
            {app.icon}
          </button>
        ))}
      </div>
      <div className="relative ml-auto flex items-center">
        <button type="button" aria-label="显示隐藏的图标">
          <svg viewBox="0 0 28 16" className="h-4 w-7"><path d="M1 15L14 2l13 13" fill="none" stroke="#fff" strokeWidth="2" /></svg>
        </button>
        <button type="button" aria-label="QQ" className="ml-[18px]"><QqIcon className="h-7 w-7" /></button>
        <button type="button" aria-label="电源" className="ml-[19px]">
          <Icon>
            <path d="M3 4v6M9 4v6" stroke="#fff" strokeWidth="2" />
            <path d="M1 9h10v4l-3 4H4l-3-4z" fill="none" stroke="#fff" strokeWidth="1.700" />
            <path d="M6 17v9" stroke="#fff" strokeWidth="2" />
            <path d="M13 8.500h16v17H8" fill="none" stroke="#fff" strokeWidth="2" />
            <path d="M13 11h13.500v12H10v-4l3-4z" fill="#fff" />
            <path d="M31 14v7" stroke="#fff" strokeWidth="2.500" />
          </Icon>
        </button>
        <button type="button" aria-label="网络" className="ml-4">
          <Icon>
            <path d="M9 5h22v18H7" fill="none" stroke="#fff" strokeWidth="2" />
            <path d="M1 5h7v9H1zM4.500 14v16M17 23v7M10 30h14" fill="none" stroke="#fff" strokeWidth="2" />
            <path d="M3 8h3" stroke="#fff" />
          </Icon>
        </button>
        <button type="button" aria-label="音量" className="ml-4">
          <Icon>
            <path d="M1 12h4l6-7v23l-6-7H1z" fill="none" stroke="#fff" strokeWidth="1.700" />
            <path d="M16 12c2 3 2 6 0 9M20 8c4 5 4 12 0 17" fill="none" stroke="#fff" strokeWidth="1.800" />
            <path d="M25 4c6 7 6 18 0 25" fill="none" stroke="#666" strokeWidth="1.800" />
          </Icon>
        </button>
        <button type="button" className="ml-[14px] text-[32px] leading-[56px]">英</button>
        <button type="button" aria-label="搜狗输入法" className="ml-[25px]">
          <Icon>
            <path d="M2 4L26 0l6 27L7 32z" fill="#f4561e" />
            <path d="M26 8c-8-2-17-1-16 4s14 3 15 8-9 6-17 4" fill="none" stroke="#fff" strokeWidth="5" />
          </Icon>
        </button>
        <time dateTime="20:11" className="ml-[34px] text-2xl leading-[60px]">20:11</time>
        <button type="button" aria-label="操作中心" className="ml-10">
          <svg viewBox="0 0 32 32" className="h-8 w-8"><path d="M1 1h30v24H21l-5 5.500-5-5.500H1z" fill="none" stroke="#fff" strokeWidth="2" /></svg>
        </button>
        <button type="button" aria-label="显示桌面" className="ml-10 h-[60px] w-[10px] border-l-2 border-[#7a7a7a]" />
      </div>
    </footer>
  );
}

export default function App() {
  return (
    <div className={`flex h-screen flex-col overflow-hidden bg-black text-white ${UI_FONT}`}>
      <TitleBar />
      <RibbonTabs />
      <AddressRow />
      <div className="flex min-h-0 grow">
        <Sidebar />
        <FileList />
      </div>
      <StatusBar />
      <Taskbar />
    </div>
  );
}
